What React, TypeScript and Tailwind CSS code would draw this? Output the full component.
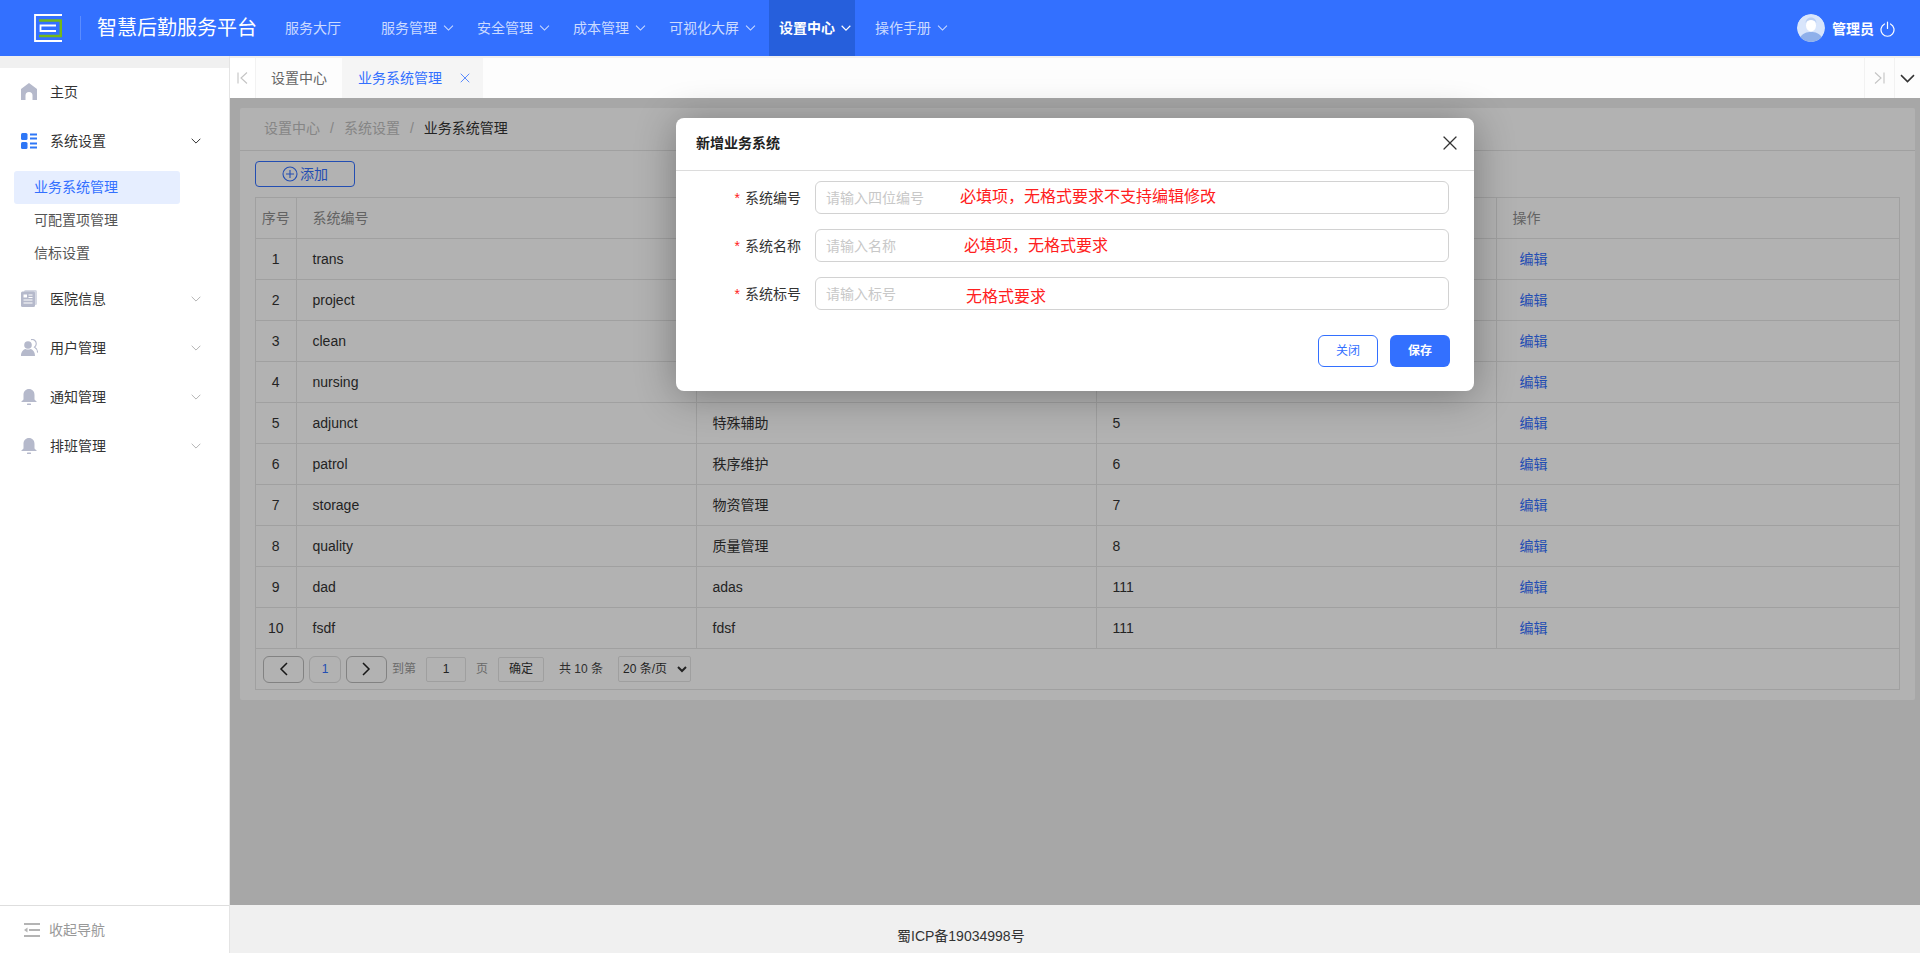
import React from 'react';
import { X } from 'lucide-react';

const FONT = '"Liberation Sans","Noto Sans CJK SC",sans-serif';

const navItems = [
  { label: '服务大厅', w: 'w-[96px]', arrow: false },
  { label: '服务管理', w: 'w-[96px]', arrow: true },
  { label: '安全管理', w: 'w-[96px]', arrow: true },
  { label: '成本管理', w: 'w-[96px]', arrow: true },
  { label: '可视化大屏', w: 'w-[100px]', arrow: true },
];

// name and number of the first four rows sit behind the dialog
const rows = [
  ['1', 'trans', '', ''],
  ['2', 'project', '', ''],
  ['3', 'clean', '', ''],
  ['4', 'nursing', '', ''],
  ['5', 'adjunct', '特殊辅助', '5'],
  ['6', 'patrol', '秩序维护', '6'],
  ['7', 'storage', '物资管理', '7'],
  ['8', 'quality', '质量管理', '8'],
  ['9', 'dad', 'adas', '111'],
  ['10', 'fsdf', 'fdsf', '111'],
];

const Chevron = ({ className, width = 1.2 }: { className?: string; width?: number }) => (
  <svg viewBox="0 0 12 7" fill="none" stroke="currentColor" strokeWidth={width} className={className}>
    <path d="M0.8 0.8 6 6 11.2 0.8" />
  </svg>
);

const Logo = () => (
  <svg width="28" height="28" viewBox="0 0 28 28" fill="none">
    <path d="M28 1H1v26h27" stroke="#fff" strokeWidth="1.800" />
    <path d="M5 6.500h21.800v15.500H5" stroke="#74b816" strokeWidth="2.500" />
    <path d="M22 11.500H6.500v5.500H22" stroke="#fff" strokeWidth="1.800" />
  </svg>
);

const Avatar = () => (
  <svg width="28" height="28" viewBox="0 0 28 28" className="rounded-full">
    <circle cx="14" cy="14" r="14" fill="#d8e5fb" />
    <path d="M3 24c2-5 7-6 11-6s9 1 11 6c-3 3-7 4-11 4s-8-1-11-4z" fill="#8fb0ea" />
    <ellipse cx="14" cy="11.500" rx="5" ry="6" fill="#fff" />
    <path d="M8.500 9c.5-4 3-5.500 5.500-5.500S19 5 19.500 9c-1-2-3-3-5.500-3s-4.500 1-5.500 3z" fill="#b9cff3" />
  </svg>
);

const PowerIcon = () => (
  <svg width="15" height="16" viewBox="0 0 15 16" fill="none" stroke="#fff" strokeWidth="1.200" strokeLinecap="round">
    <path d="M4.500 3A6.500 6.500 0 1 0 10.500 3" />
    <path d="M7.500 1v6.500" />
  </svg>
);

const HomeIcon = () => (
  <svg width="16" height="17" viewBox="0 0 16 17" fill="#b5b9cb">
    <path d="M8 0 16 6v11h-4.500v-4.500a3.500 3.500 0 0 0-7 0V17H0V6z" />
  </svg>
);

const GridIcon = () => (
  <svg width="16" height="16" viewBox="0 0 16 16" fill="#2e77f6">
    <rect x="0" y="0" width="6.500" height="7" rx="1.500" />
    <rect x="0" y="9" width="6.500" height="7" rx="1.500" />
    <rect x="9" y="0.500" width="7" height="2" />
    <rect x="9" y="4.500" width="7" height="2" />
    <rect x="9" y="9.500" width="7" height="2" />
    <rect x="9" y="13.500" width="7" height="2" />
  </svg>
);

const DocIcon = () => (
  <svg width="16" height="17" viewBox="0 0 16 17">
    <rect x="3" y="0" width="13" height="15" rx="1.500" fill="#d5d8e3" />
    <rect x="0" y="1.500" width="14" height="15.500" rx="1.500" fill="#b5b9cb" />
    <rect x="2.500" y="4.500" width="3.500" height="3" fill="#fff" />
    <path d="M7.500 5h4M7.500 7.500h4M2.500 10h9M2.500 13h9" stroke="#fff" strokeWidth="1.100" />
  </svg>
);

const UserIcon = () => (
  <svg width="17" height="17" viewBox="0 0 17 17" fill="#b5b9cb">
    <circle cx="7" cy="6" r="3.800" />
    <path d="M0 17c0-4 2-6.500 4.500-7 1.500.8 3.500.8 5 0 2.500.5 4.500 3 4.500 7z" />
    <path d="M10 .6c3-.6 5.500 1.500 5.200 4.500-.1 1.300-.8 2.300-1.800 3 1.800 1 3 2.800 3.200 5.500" fill="none" stroke="#b5b9cb" strokeWidth="1.100" />
  </svg>
);

const BellIcon = () => (
  <svg width="16" height="16" viewBox="0 0 16 16" fill="#b5b9cb">
    <path d="M8 0c3.300 0 5.500 2.500 5.500 6v4.500L16 13H0l2.500-2.500V6C2.500 2.500 4.700 0 8 0z" />
    <rect x="6" y="14.500" width="4" height="1.500" rx=".5" />
  </svg>
);

const CollapseIcon = () => (
  <svg width="16" height="14" viewBox="0 0 16 14" fill="#b4b4b4">
    <rect x="0" y="0" width="16" height="2" />
    <rect x="5" y="6" width="11" height="2" />
    <rect x="0" y="12" width="16" height="2" />
    <path d="M3.500 4.500v5L0 7z" />
  </svg>
);

const MenuRow = ({ icon, label, open }: { icon: React.ReactNode; label: string; open?: boolean }) => (
  <div className="flex h-[49px] items-center pb-[2px] text-sm text-[#333]">
    <div className="flex w-[50px] pl-[21px]">{icon}</div>
    <span className="flex-1">{label}</span>
    {label !== '主页' && (
      <Chevron className={`mr-[28px] h-[6px] w-[10px] ${open ? 'text-[#333]' : 'text-[#b5b5b5]'}`} />
    )}
  </div>
);

const Sidebar = () => (
  <aside className="flex w-[230px] shrink-0 flex-col border-r border-[#e4e4e4] bg-white">
    <div className="h-[12px] shrink-0 bg-[#f0f0f0]" />
    <div className="flex-1">
      <MenuRow icon={<HomeIcon />} label="主页" />
      <MenuRow icon={<GridIcon />} label="系统设置" open />
      <div className="mb-[5px] mt-[5px] pl-[14px] text-sm">
        <div className="flex h-[33px] w-[166px] items-center rounded-[3px] bg-[#e6eeff] pb-[2px] pl-[20px] text-[#3370ff]">业务系统管理</div>
        <div className="flex h-[33px] items-center pb-[2px] pl-[20px] text-[#555]">可配置项管理</div>
        <div className="flex h-[33px] items-center pb-[2px] pl-[20px] text-[#555]">信标设置</div>
      </div>
      <MenuRow icon={<DocIcon />} label="医院信息" />
      <MenuRow icon={<UserIcon />} label="用户管理" />
      <MenuRow icon={<BellIcon />} label="通知管理" />
      <MenuRow icon={<BellIcon />} label="排班管理" />
    </div>
    <div className="flex h-[48px] shrink-0 items-center gap-[9px] border-t border-[#dedede] pl-[24px] text-sm text-[#999]">
      <CollapseIcon />
      <span>收起导航</span>
    </div>
  </aside>
);

const Header = () => (
  <header className="flex h-14 shrink-0 items-center bg-[#3370ff] text-sm text-white">
    <div className="ml-[34px] flex items-center">
      <Logo />
    </div>
    <div className="ml-[18px] h-[24px] w-px bg-white/20" />
    <div className="ml-[16px] w-[188px] text-xl leading-7">智慧后勤服务平台</div>
    <nav className="flex h-full">
      {navItems.map((n) => (
        <div key={n.label} className={`flex h-full items-center gap-[6px] pb-[1px] text-white/75 ${n.w}`}>
          <span>{n.label}</span>
          {n.arrow && <Chevron className="h-[6px] w-[11px]" />}
        </div>
      ))}
      <div className="flex h-full w-[86px] items-center gap-[6px] bg-[#265fdc] pb-[1px] pl-[10px] font-bold text-white">
        <span>设置中心</span>
        <Chevron className="h-[6px] w-[10px]" width={1.4} />
      </div>
      <div className="ml-[20px] flex h-full items-center gap-[6px] pb-[1px] text-white/75">
        <span>操作手册</span>
        <Chevron className="h-[6px] w-[11px]" />
      </div>
    </nav>
    <div className="ml-auto mr-[25px] flex items-center">
      <Avatar />
      <span className="ml-[7px] mt-[2px] font-bold">管理员</span>
      <span className="ml-[6px] mt-[2px]"><PowerIcon /></span>
    </div>
  </header>
);

const TabBar = () => (
  <div className="flex h-10 shrink-0 items-stretch bg-[#fdfdfd] text-sm">
    <div className="flex w-[25px] items-center justify-center bg-white">
      <svg width="11" height="12" viewBox="0 0 11 12" fill="none" stroke="#c4c4c4" strokeWidth="1.100">
        <path d="M1 0.500v11M10 0.500 4 6l6 5.500" />
      </svg>
    </div>
    <div className="flex w-[87px] items-center justify-center border-l border-[#f2f2f2] text-[#666]">设置中心</div>
    <div className="flex w-[141px] items-center bg-[#f5f5f5] pl-[16px] text-[#3370ff]">
      <span>业务系统管理</span>
      <X className="ml-[15px] text-[#3370ff]" size={16} strokeWidth={1.2} />
    </div>
    <div className="flex-1" />
    <div className="flex w-[30px] items-center justify-center border-l border-[#f2f2f2]">
      <svg width="11" height="12" viewBox="0 0 11 12" fill="none" stroke="#c4c4c4" strokeWidth="1.100">
        <path d="M10 0.500v11M1 0.500 7 6l-6 5.500" />
      </svg>
    </div>
    <div className="flex w-[26px] items-center justify-center border-l border-[#f2f2f2]">
      <Chevron className="h-[9px] w-[15px] text-[#333]" />
    </div>
  </div>
);

const Pager = () => (
  <div className="flex h-[40px] items-start gap-[5px] pl-[7px] pt-[7px] text-xs">
    <div className="flex h-[27px] w-[41px] items-center justify-center rounded-[6px] border border-[#bbb] text-[#222]">
      <svg width="9" height="14" viewBox="0 0 9 14" fill="none" stroke="currentColor" strokeWidth="1.500"><path d="M8 1 2 7l6 6" /></svg>
    </div>
    <div className="flex h-[27px] w-[32px] items-center justify-center rounded-[6px] border border-[#ddd] text-[#3370ff]">1</div>
    <div className="flex h-[27px] w-[41px] items-center justify-center rounded-[6px] border border-[#bbb] text-[#222]">
      <svg width="9" height="14" viewBox="0 0 9 14" fill="none" stroke="currentColor" strokeWidth="1.500"><path d="M1 1l6 6-6 6" /></svg>
    </div>
    <span className="flex h-[27px] items-center text-[#999]">到第</span>
    <input readOnly value="1" className="ml-[5px] mt-[1px] h-[25px] w-[40px] rounded-[2px] border border-[#e4e4e4] text-center text-xs text-[#333] outline-none" />
    <span className="ml-[5px] mt-[1px] flex h-[25px] items-center text-[#999]">页</span>
    <div className="ml-[5px] mt-[1px] flex h-[25px] w-[46px] items-center justify-center rounded-[2px] border border-[#e4e4e4] text-[#333]">确定</div>
    <span className="ml-[10px] mt-[1px] flex h-[25px] items-center text-[#444]">共 10 条</span>
    <select className="ml-[10px] h-[26px] w-[73px] rounded-[2px] border border-[#e4e4e4] text-xs text-[#333] outline-none">
      <option>20 条/页</option>
    </select>
  </div>
);

const SystemTable = () => (
  <div className="border border-[#e6e6e6]">
    <table className="w-full table-fixed border-collapse text-sm">
      <colgroup>
        <col className="w-[40px]" />
        <col className="w-[400px]" />
        <col className="w-[400px]" />
        <col className="w-[400px]" />
        <col />
      </colgroup>
      <thead>
        <tr className="h-[40px] text-left text-[#8f8f8f]">
          <th className="border-b border-[#e6e6e6] text-center font-normal">序号</th>
          <th className="border-b border-l border-[#e6e6e6] pl-[16px] font-normal">系统编号</th>
          <th className="border-b border-l border-[#e6e6e6] pl-[16px] font-normal" />
          <th className="border-b border-l border-[#e6e6e6] pl-[16px] font-normal" />
          <th className="border-b border-l border-[#e6e6e6] pl-[16px] font-normal">操作</th>
        </tr>
      </thead>
      <tbody className="text-[#333]">
        {rows.map((r) => (
          <tr key={r[0]} className="h-[41px]">
            <td className="border-b border-[#e6e6e6] text-center">{r[0]}</td>
            <td className="border-b border-l border-[#e6e6e6] pl-[16px]">{r[1]}</td>
            <td className="border-b border-l border-[#e6e6e6] pl-[16px]">{r[2]}</td>
            <td className="border-b border-l border-[#e6e6e6] pl-[16px]">{r[3]}</td>
            <td className="border-b border-l border-[#e6e6e6] pl-[23px] text-[#3370ff]">编辑</td>
          </tr>
        ))}
      </tbody>
    </table>
    <Pager />
  </div>
);

const Field = ({ label, placeholder, note, noteClass }: { label: string; placeholder: string; note: string; noteClass: string }) => (
  <div className="flex h-[33px] items-center">
    <div className="flex w-[139px] justify-end pr-[14px] pt-[1px] text-sm text-[#333]">
      <span className="mr-[5px] text-[#ff2020]">*</span>
      {label}
    </div>
    <div className="relative">
      <input
        placeholder={placeholder}
        className="h-[33px] w-[634px] rounded-[6px] border border-[#d2d2d2] px-[10px] text-sm outline-none placeholder:text-[#c8c8c8]"
      />
      <span className={`absolute whitespace-nowrap text-base leading-6 text-[#ff2020] ${noteClass}`}>{note}</span>
    </div>
  </div>
);

const Modal = () => (
  <div className="h-[273px] w-[798px] rounded-lg bg-white shadow-[0_4px_40px_rgba(0,0,0,0.32)]">
    <div className="flex h-[53px] items-center justify-between border-b border-[#dcdcdc] pb-[2px] pl-[20px] pr-[11px]">
      <span className="text-sm font-bold text-[#222]">新增业务系统</span>
      <X className="mb-[1px] mr-[1px] text-[#333]" size={24} strokeWidth={1.2} />
    </div>
    <div className="flex flex-col gap-[15px] pt-[10px]">
      <Field label="系统编号" placeholder="请输入四位编号" note="必填项，无格式要求不支持编辑修改" noteClass="left-[145px] top-[4px]" />
      <Field label="系统名称" placeholder="请输入名称" note="必填项，无格式要求" noteClass="left-[149px] top-[5px]" />
      <Field label="系统标号" placeholder="请输入标号" note="无格式要求" noteClass="left-[151px] top-[8px]" />
    </div>
    <div className="mr-[24px] mt-[25px] flex justify-end gap-[12px]">
      <button className="h-[32px] w-[60px] rounded-[6px] border border-[#3370ff] bg-white text-xs text-[#3370ff]">关闭</button>
      <button className="h-[32px] w-[60px] rounded-[6px] bg-[#3370ff] text-xs font-bold text-white">保存</button>
    </div>
  </div>
);

export default function App() {
  return (
    <div className="flex h-[953px] w-[1920px] flex-col overflow-hidden bg-[#f0f0f0]" style={{ fontFamily: FONT }}>
      <Header />
      <div className="flex min-h-0 flex-1">
        <Sidebar />
        <main className="flex min-w-0 flex-1 flex-col pt-[2px]">
          <TabBar />
          <div className="relative min-h-0 flex-1 pb-[10px] pl-[10px] pr-[5px] pt-[10px]">
            <div className="rounded-[2px] bg-white">
              <div className="flex h-[43px] items-center border-b border-[#e6e6e6] pb-[3px] pl-[24px] text-sm text-[#c0c0c0]">
                <span>设置中心</span>
                <span className="mx-[10px]">/</span>
                <span>系统设置</span>
                <span className="mx-[10px]">/</span>
                <span className="text-[#333]">业务系统管理</span>
              </div>
              <div className="px-[15px] pb-[10px] pt-[10px]">
                <button className="mb-[10px] flex h-[26px] w-[100px] items-center justify-center gap-[2px] rounded-[4px] border border-[#3370ff] text-sm text-[#3370ff]">
                  <svg width="16" height="16" viewBox="0 0 16 16" fill="none" stroke="currentColor" strokeWidth="1.100">
                    <circle cx="8" cy="8" r="7" />
                    <path d="M8 4v8M4 8h8" />
                  </svg>
                  <span>添加</span>
                </button>
                <SystemTable />
              </div>
            </div>
            {/* overlay + dialog */}
            <div className="absolute inset-0 flex justify-center bg-black/30 pt-[20px]">
              <Modal />
            </div>
          </div>
          <div className="flex h-[48px] shrink-0 items-center pl-[667px] pt-[14px] text-sm text-[#333]">蜀ICP备19034998号</div>
        </main>
      </div>
    </div>
  );
}
